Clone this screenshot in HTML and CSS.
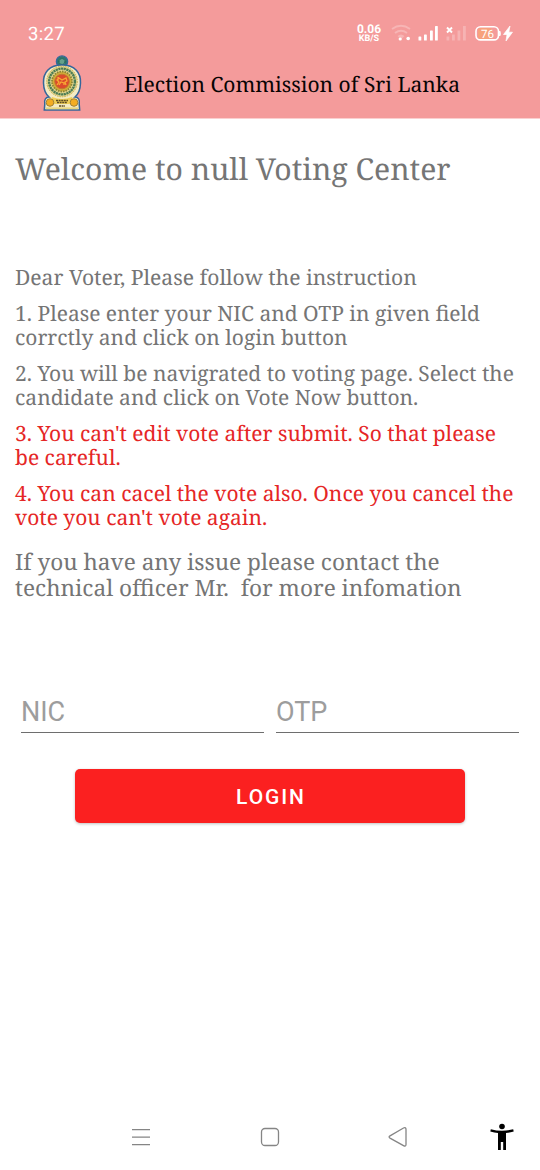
FILE: index.html
```html
<!DOCTYPE html>
<html lang="en">
<head>
<meta charset="utf-8">
<title>Election Commission of Sri Lanka</title>
<link rel="stylesheet" href="styles.css">
</head>
<body>
<div class="screen">
  <header class="top">
    <div class="status">
      <span class="clock">3:27</span>
      <div class="speed"><b>0.06</b><small>KB/S</small></div>
      <svg class="signals" width="134" height="24" viewBox="0 0 134 24">
        <g fill="none" stroke="#fff" stroke-opacity=".26" stroke-width="2">
          <path d="M8 8Q17 1.500 26 8M11 12Q17 7.500 23 12"/>
        </g>
        <path d="M13.500 15Q17 12 20.500 15L17 18.500Z" fill="#fff" fill-opacity=".26"/>
        <circle cx="16.200" cy="18" r="1.600" fill="#fff"/><circle cx="24.200" cy="17.500" r="1.800" fill="#fff"/>
        <g fill="#fff">
          <rect x="34.500" y="15.500" width="2.800" height="4" rx=".6"/><rect x="40" y="13.500" width="2.800" height="6" rx=".6"/><rect x="46" y="9.500" width="2.800" height="10" rx=".6"/><rect x="51" y="5" width="2.800" height="14.500" rx=".6"/>
        </g>
        <path d="M63 6.500L68 11.500M68 6.500L63 11.500" stroke="#fff" stroke-width="1.900"/>
        <g fill="#fff" fill-opacity=".24">
          <rect x="62.500" y="15.500" width="2.800" height="4"/><rect x="68" y="13.500" width="2.800" height="6"/><rect x="73.500" y="9.500" width="2.800" height="10"/><rect x="79" y="5" width="2.800" height="14.500"/>
        </g>
        <rect x="94" y="7" width="14" height="11" rx="3" fill="#f7a27c"/>
        <rect x="92" y="5.700" width="22.500" height="13.200" rx="4.500" fill="none" stroke="#fff" stroke-width="1.600"/>
        <path d="M115.700 10Q117 12.500 115.700 15Z" fill="#fff" stroke="#fff"/>
        <text x="97" y="16.500" class="battery">76</text>
        <path d="M126 5L119.500 13.500H123L122 20L128.500 11.200H124.800Z" fill="#fff" stroke="#fff" stroke-width=".7"/>
      </svg>
    </div>
    <div class="brand">
      <svg class="emblem" width="42" height="58" viewBox="0 0 42 58">
        <circle cx="21" cy="7.500" r="5.600" fill="#2f786c" stroke="#35699b" stroke-width="1.400"/>
        <circle cx="21" cy="7.500" r="2.900" fill="#65a18b" stroke="#195856" stroke-width=".9" stroke-dasharray="1.500 .6"/>
        <path d="M21 11C34 11 40 19 39.500 29C39.300 36 37.500 40 34 43C37.500 43 39 46 38.200 50L38.700 56H3.300L3.800 50C3 46 4.500 43 8 43C4.500 40 2.700 36 2.500 29C2 19 8 11 21 11Z" fill="#f4ebc4" stroke="#35669b" stroke-width="1.500"/>
        <circle cx="21" cy="27.500" r="15.300" fill="#e3d690" stroke="#cbb04b" stroke-dasharray="1.500 1"/>
        <circle cx="21" cy="27.500" r="12.900" fill="none" stroke="#4c7c54" stroke-width="2.400" stroke-dasharray="2.200 .5"/>
        <circle cx="21" cy="27.500" r="10" fill="#d2ac38" stroke="#8c8537" stroke-width="1.800" stroke-dasharray="1.600 1"/>
        <circle cx="21" cy="27.500" r="7.300" fill="#dc4a2c" stroke="#c4772e"/>
        <path d="M16 31L18 28L16 26L18 24L21 26L25 24L26 27L24 28L25 31M18 31L20 28L23 29V31M17 23V27" fill="none" stroke="#f8a833" stroke-width="1.300"/>
        <path d="M11 43Q21 47 31 43L33 50H9Z" fill="#efcf57"/>
        <path d="M15 46.500H27M16 48.500H26M18 52H24" stroke="#5d4b22" stroke-width="1.700" stroke-dasharray="2 .6"/>
        <circle cx="9" cy="48.500" r="3.800" fill="#f4ad22" stroke="#a28137"/><circle cx="33" cy="48.500" r="3.800" fill="#f4ad22" stroke="#a28137"/>
        <path d="M5 54.300H37" stroke="#e8d67e" stroke-width="1.800"/>
      </svg>
      <h1 class="title">Election Commission of Sri Lanka</h1>
    </div>
  </header>
  <main class="content">
    <h2 class="welcome">Welcome to null Voting Center</h2>
    <div class="steps">
      <p class="intro">Dear Voter, Please follow the instruction</p>
      <p>1. Please enter your NIC and OTP in given field<br>corrctly and click on login button</p>
      <p>2. You will be navigrated to voting page. Select the<br>candidate and click on Vote Now button.</p>
      <p class="warn">3. You can't edit vote after submit. So that please<br>be careful.</p>
      <p class="warn">4. You can cacel the vote also. Once you cancel the<br>vote you can't vote again.</p>
    </div>
    <p class="contact">If you have any issue please contact the<br>technical officer Mr.&nbsp; for more infomation</p>
    <form class="login">
      <div class="fields">
        <input class="field" type="text" placeholder="NIC" aria-label="NIC">
        <input class="field" type="text" placeholder="OTP" aria-label="OTP">
      </div>
      <button class="submit" type="button">LOGIN</button>
    </form>
  </main>
  <nav class="nav">
    <svg width="20" height="20" viewBox="0 0 20 20" fill="none" stroke="#858585" stroke-width="1.300"><path d="M1 2.700H19M1 10.200H19M1 17.700H19"/></svg>
    <svg width="20" height="20" viewBox="0 0 20 20" fill="none" stroke="#858585" stroke-width="1.300"><rect x="1.500" y="1.500" width="17" height="17" rx="3.500"/></svg>
    <svg width="20" height="20" viewBox="0 0 20 20" fill="none" stroke="#858585" stroke-width="1.300"><path d="M2 8.900L15.500 1Q18 0 18 2.500V17.500Q18 20 15.500 18.600L2 11.100Q.2 10 2 8.900Z"/></svg>
    <svg class="access" width="24" height="28" viewBox="0 0 24 28"><circle cx="12" cy="3.500" r="2.800"/><path d="M.8 6.200Q12 9.200 23.200 6.200L23.700 8.500Q19.500 9.700 16 10V27H13.200V19H10.800V27H8V10Q4.500 9.700.3 8.500Z"/></svg>
  </nav>
</div>
</body>
</html>
```
FILE: styles.css
```css
* { box-sizing: border-box; }
body { margin: 0; background: #fff; }
.screen {
  width: 540px; height: 1170px; display: flex; flex-direction: column;
  font-family: "Noto Serif", "DejaVu Serif Condensed", "DejaVu Serif", serif;
  color: #757575; background: #fff; text-rendering: geometricPrecision;
}
h1, h2, p { margin: 0; font-weight: 400; white-space: nowrap; }
.top { height: 118px; background: #f49b9b; box-shadow: 0 1px 0 #fad0d0; }
.status { height: 52px; padding: 21px 22px 0 28px; display: flex; color: #fff; font-family: Roboto, sans-serif; }
.clock { width: 327px; font-size: 18.500px; line-height: 27px; letter-spacing: .3px; }
.speed { width: 28px; display: flex; flex-direction: column; padding-top: 3px; text-align: center; }
.speed b { font-size: 12px; line-height: 11px; }
.speed small { font-size: 9px; line-height: 8px; font-weight: 700; }
.signals { margin-left: 1px; }
.battery { font-family: Roboto, sans-serif; font-size: 11.500px; fill: #fff; }
.brand { display: flex; padding: 2px 0 0 41px; }
.title { margin-left: 41px; padding-top: 16px; font-size: 21px; line-height: 30px; color: #080404; }
.content { flex: 1; padding: 32px 15px 0; }
.welcome { font-size: 30.150px; line-height: 38px; }
.steps { padding-top: 78px; display: flex; flex-direction: column; gap: 11px; font-size: 21px; line-height: 24.500px; }
.intro { font-size: 21.100px; }
.warn { color: #e52626; }
.contact { padding-top: 18px; font-size: 22.600px; line-height: 26.500px; }
.login { padding: 84px 6px 0; }
.fields { display: grid; grid-template-columns: 243px 243px; gap: 12px; }
.field {
  min-width: 0; height: 47px; padding: 7px 0 0; border: 0; border-bottom: 1px solid #6e6e6e;
  border-radius: 0; background: none; font: 27px/38px Roboto, sans-serif;
}
.field::placeholder { color: #9d9d9d; opacity: 1; }
.submit {
  display: block; width: 390px; height: 54px; margin: 36px 0 0 54px; padding: 2px 0 0 2px;
  border: 0; border-radius: 5px; background: #fb2020; color: #fff;
  font: 500 21px/50px Roboto, sans-serif; letter-spacing: 1.900px;
  box-shadow: 0 1px 3px rgba(0,0,0,.25);
}
.nav { height: 66px; padding: 23px 26px 0 131px; display: flex; }
.nav svg + svg { margin-left: 109px; }
.nav svg:nth-child(3) { margin-left: 108px; }
.nav svg.access { margin: -4px 0 0 auto; }
```
